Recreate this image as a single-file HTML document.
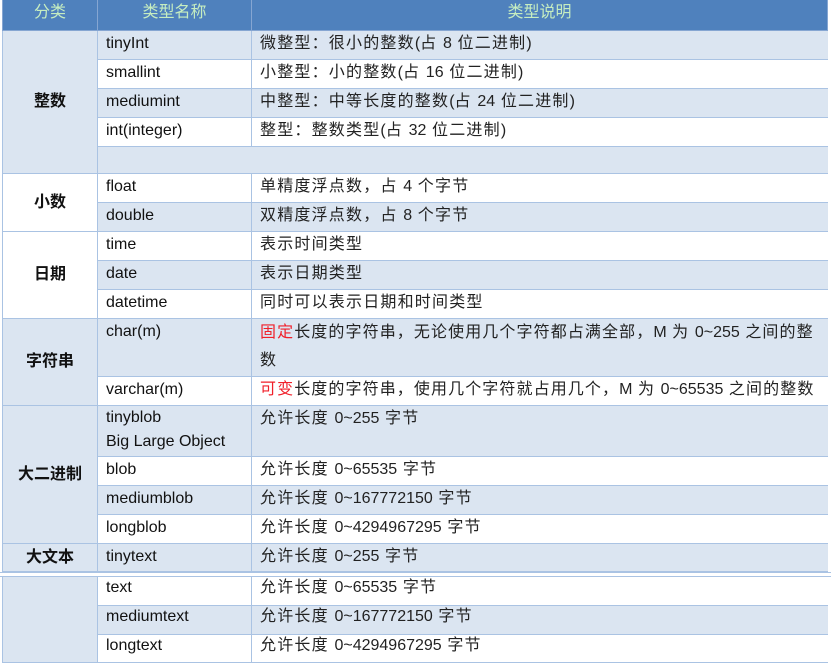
<!DOCTYPE html><html><head><meta charset="utf-8"><style>
body{margin:0;width:831px;height:663px;background:#fff;position:relative;overflow:hidden;font-family:"Liberation Sans","Noto Sans CJK SC",sans-serif;font-size:16px;color:#111}
div.c{position:absolute;box-sizing:border-box;border:1px solid #aac3e3;border-width:0 0 1px 1px;padding:0 0 0 8px;line-height:26px;white-space:nowrap}
div.d{letter-spacing:1.2px;color:#222}
i{font-style:normal;letter-spacing:0}
.b{background:#dbe5f1}.w{background:#fff}
.k{display:flex;align-items:center;justify-content:center;padding:0!important;font-weight:bold}
.h{background:#4f81bd;color:#c6edc0;text-align:center;padding:0!important;line-height:28px;border-color:#86a6d2!important}
.r{color:#f0202a}
</style></head><body>
<div class="c h" style="left:2px;top:0;width:95px;height:31px">分类</div>
<div class="c h" style="left:97px;top:0;width:154px;height:31px">类型名称</div>
<div class="c h" style="left:251px;top:0;width:577px;height:31px;border-right-width:1px">类型说明</div>

<div class="c b k" style="left:2px;top:31px;width:95px;height:143px">整数</div>
<div class="c w k" style="left:2px;top:174px;width:95px;height:58px">小数</div>
<div class="c w k" style="left:2px;top:232px;width:95px;height:87px">日期</div>
<div class="c b k" style="left:2px;top:319px;width:95px;height:87px">字符串</div>
<div class="c b k" style="left:2px;top:406px;width:95px;height:138px">大二进制</div>
<div class="c b k" style="left:2px;top:544px;width:95px;height:28px">大文本</div>
<div class="c b" style="left:2px;top:577px;width:95px;height:86px"></div>

<div class="c b" style="left:97px;top:31px;width:154px;height:29px">tinyInt</div><div class="c b d" style="left:251px;top:31px;width:577px;height:29px">微整型：很小的整数<i>(</i>占 <i>8</i> 位二进制<i>)</i></div>
<div class="c w" style="left:97px;top:60px;width:154px;height:29px">smallint</div><div class="c w d" style="left:251px;top:60px;width:577px;height:29px">小整型：小的整数<i>(</i>占 <i>16</i> 位二进制<i>)</i></div>
<div class="c b" style="left:97px;top:89px;width:154px;height:29px">mediumint</div><div class="c b d" style="left:251px;top:89px;width:577px;height:29px">中整型：中等长度的整数<i>(</i>占 <i>24</i> 位二进制<i>)</i></div>
<div class="c w" style="left:97px;top:118px;width:154px;height:29px">int(integer)</div><div class="c w d" style="left:251px;top:118px;width:577px;height:29px">整型：整数类型<i>(</i>占 <i>32</i> 位二进制<i>)</i></div>
<div class="c b" style="left:97px;top:147px;width:731px;height:27px"></div>
<div class="c w" style="left:97px;top:174px;width:154px;height:29px">float</div><div class="c w d" style="left:251px;top:174px;width:577px;height:29px">单精度浮点数，占 <i>4</i> 个字节</div>
<div class="c b" style="left:97px;top:203px;width:154px;height:29px">double</div><div class="c b d" style="left:251px;top:203px;width:577px;height:29px">双精度浮点数，占 <i>8</i> 个字节</div>
<div class="c w" style="left:97px;top:232px;width:154px;height:29px">time</div><div class="c w d" style="left:251px;top:232px;width:577px;height:29px">表示时间类型</div>
<div class="c b" style="left:97px;top:261px;width:154px;height:29px">date</div><div class="c b d" style="left:251px;top:261px;width:577px;height:29px">表示日期类型</div>
<div class="c w" style="left:97px;top:290px;width:154px;height:29px">datetime</div><div class="c w d" style="left:251px;top:290px;width:577px;height:29px">同时可以表示日期和时间类型</div>
<div class="c b" style="left:97px;top:319px;width:154px;height:58px">char(m)</div><div class="c b d" style="left:251px;top:319px;width:577px;height:58px;line-height:28px;letter-spacing:1.1px"><span class="r">固定</span>长度的字符串，无论使用几个字符都占满全部，<i>M</i> 为 <i>0~255</i> 之间的整<br>数</div>
<div class="c w" style="left:97px;top:377px;width:154px;height:29px">varchar(m)</div><div class="c w d" style="left:251px;top:377px;width:577px;height:29px;letter-spacing:1.1px"><span class="r">可变</span>长度的字符串，使用几个字符就占用几个，<i>M</i> 为 <i>0~65535</i> 之间的整数</div>
<div class="c b" style="left:97px;top:406px;width:154px;height:51px;line-height:24px">tinyblob<br>Big Large Object</div><div class="c b d" style="left:251px;top:406px;width:577px;height:51px">允许长度 <i>0~255</i> 字节</div>
<div class="c w" style="left:97px;top:457px;width:154px;height:29px">blob</div><div class="c w d" style="left:251px;top:457px;width:577px;height:29px">允许长度 <i>0~65535</i> 字节</div>
<div class="c b" style="left:97px;top:486px;width:154px;height:29px">mediumblob</div><div class="c b d" style="left:251px;top:486px;width:577px;height:29px">允许长度 <i>0~167772150</i> 字节</div>
<div class="c w" style="left:97px;top:515px;width:154px;height:29px">longblob</div><div class="c w d" style="left:251px;top:515px;width:577px;height:29px">允许长度 <i>0~4294967295</i> 字节</div>
<div class="c b" style="left:97px;top:544px;width:154px;height:28px">tinytext</div><div class="c b d" style="left:251px;top:544px;width:577px;height:28px">允许长度 <i>0~255</i> 字节</div>
<div class="c w" style="left:97px;top:577px;width:154px;height:29px;line-height:22px">text</div><div class="c w d" style="left:251px;top:577px;width:577px;height:29px;line-height:22px">允许长度 <i>0~65535</i> 字节</div>
<div class="c b" style="left:97px;top:606px;width:154px;height:29px;line-height:22px">mediumtext</div><div class="c b d" style="left:251px;top:606px;width:577px;height:29px;line-height:22px">允许长度 <i>0~167772150</i> 字节</div>
<div class="c w" style="left:97px;top:635px;width:154px;height:28px;line-height:22px">longtext</div><div class="c w d" style="left:251px;top:635px;width:577px;height:28px;line-height:22px">允许长度 <i>0~4294967295</i> 字节</div>
<div style="position:absolute;left:0;top:572px;width:831px;height:5px;background:#fff;border-top:1px solid #aac3e3;border-bottom:1px solid #aac3e3;box-sizing:border-box"></div>
</body></html>
